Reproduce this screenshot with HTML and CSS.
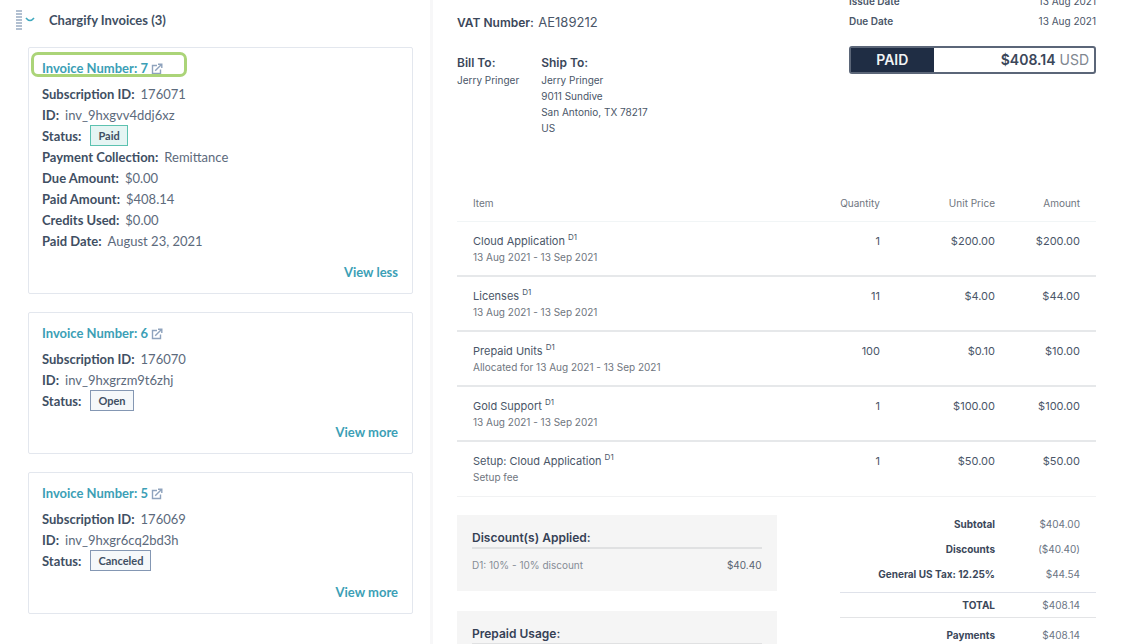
FILE: index.html
```
<!DOCTYPE html>
<html lang="en">
<head>
    <meta charset="UTF-8">
    <meta name="viewport" content="width=device-width, initial-scale=1.0">
    <title>Chargify Invoices</title>
    <link rel="stylesheet" href="styles.css">
</head>
<body>
    <!-- Shared icon -->
    <svg class="sprite" width="0" height="0">
        <symbol id="external" viewBox="0 0 12 12">
            <path d="M6 2.5H1.5v8h8V6.5M4.2 7.8L10.5 1.5M7 1.2h3.8V5" fill="none" stroke="currentColor" stroke-width="1.4"/>
        </symbol>
    </svg>
    <div class="page">
        <aside class="sidebar">
            <button type="button" class="panel-header">
                <svg class="grip" viewBox="0 0 6 20"><path d="M0 1h6M0 4h6M0 7h6M0 10h6M0 13h6M0 16h6M0 19h6" stroke="#99acc2" stroke-width="1.4"/></svg>
                <svg class="chevron" viewBox="0 0 10 6"><path d="M1 1q4 5 8 0" fill="none" stroke="#3fa9be" stroke-width="1.6"/></svg>
                <span>Chargify Invoices (3)</span>
            </button>

            <div class="card">
                <div class="highlight"></div>
                <a href="#" class="card-title">Invoice Number: 7 <svg class="external"><use href="#external"/></svg></a>
                <dl>
                    <div><dt>Subscription ID:</dt><dd>176071</dd></div>
                    <div><dt>ID:</dt><dd>inv_9hxgvv4ddj6xz</dd></div>
                    <div><dt>Status:</dt><dd class="tag paid">Paid</dd></div>
                    <div><dt>Payment Collection:</dt><dd>Remittance</dd></div>
                    <div><dt>Due Amount:</dt><dd>$0.00</dd></div>
                    <div><dt>Paid Amount:</dt><dd>$408.14</dd></div>
                    <div><dt>Credits Used:</dt><dd>$0.00</dd></div>
                    <div><dt>Paid Date:</dt><dd>August 23, 2021</dd></div>
                </dl>
                <button type="button" class="view">View less</button>
            </div>

            <div class="card">
                <a href="#" class="card-title">Invoice Number: 6 <svg class="external"><use href="#external"/></svg></a>
                <dl>
                    <div><dt>Subscription ID:</dt><dd>176070</dd></div>
                    <div><dt>ID:</dt><dd>inv_9hxgrzm9t6zhj</dd></div>
                    <div><dt>Status:</dt><dd class="tag">Open</dd></div>
                </dl>
                <button type="button" class="view">View more</button>
            </div>

            <div class="card">
                <a href="#" class="card-title">Invoice Number: 5 <svg class="external"><use href="#external"/></svg></a>
                <dl>
                    <div><dt>Subscription ID:</dt><dd>176069</dd></div>
                    <div><dt>ID:</dt><dd>inv_9hxgr6cq2bd3h</dd></div>
                    <div><dt>Status:</dt><dd class="tag">Canceled</dd></div>
                </dl>
                <button type="button" class="view">View more</button>
            </div>
        </aside>

        <main class="invoice">
            <header class="invoice-top">
                <div class="parties">
                    <p class="vat"><b>VAT Number:</b> <span>AE189212</span></p>
                    <div class="addresses">
                        <div>
                            <h2>Bill To:</h2>
                            <p>Jerry Pringer</p>
                        </div>
                        <div>
                            <h2>Ship To:</h2>
                            <p>Jerry Pringer<br>9011 Sundive<br>San Antonio, TX 78217<br>US</p>
                        </div>
                    </div>
                </div>
                <div class="meta">
                    <div class="meta-row"><b>Issue Date</b><span>13 Aug 2021</span></div>
                    <div class="meta-row"><b>Due Date</b><span>13 Aug 2021</span></div>
                    <div class="total-box">
                        <span class="total-status">PAID</span>
                        <span class="total-amount"><b>$408.14</b> USD</span>
                    </div>
                </div>
            </header>

            <table class="items">
                <thead>
                    <tr><th>Item</th><th class="qty">Quantity</th><th class="price">Unit Price</th><th class="amount">Amount</th></tr>
                </thead>
                <tbody>
                    <tr><td>Cloud Application <sup>D1</sup><small>13 Aug 2021 - 13 Sep 2021</small></td><td>1</td><td>$200.00</td><td>$200.00</td></tr>
                    <tr><td>Licenses <sup>D1</sup><small>13 Aug 2021 - 13 Sep 2021</small></td><td>11</td><td>$4.00</td><td>$44.00</td></tr>
                    <tr><td>Prepaid Units <sup>D1</sup><small>Allocated for 13 Aug 2021 - 13 Sep 2021</small></td><td>100</td><td>$0.10</td><td>$10.00</td></tr>
                    <tr><td>Gold Support <sup>D1</sup><small>13 Aug 2021 - 13 Sep 2021</small></td><td>1</td><td>$100.00</td><td>$100.00</td></tr>
                    <tr><td>Setup: Cloud Application <sup>D1</sup><small>Setup fee</small></td><td>1</td><td>$50.00</td><td>$50.00</td></tr>
                </tbody>
            </table>

            <div class="summary">
                <div class="notes">
                    <section class="note">
                        <h3>Discount(s) Applied:</h3>
                        <p><span>D1: 10% - 10% discount</span><span class="note-value">$40.40</span></p>
                    </section>
                    <section class="note">
                        <h3>Prepaid Usage:</h3>
                    </section>
                </div>
                <table class="totals">
                    <tr><th>Subtotal</th><td>$404.00</td></tr>
                    <tr><th>Discounts</th><td>($40.40)</td></tr>
                    <tr class="tax"><th>General US Tax: 12.25%</th><td>$44.54</td></tr>
                    <tr class="grand"><th>TOTAL</th><td>$408.14</td></tr>
                    <tr class="payments"><th>Payments</th><td>$408.14</td></tr>
                </table>
            </div>
        </main>
    </div>
</body>
</html>
```
FILE: styles.css
```
* {
    box-sizing: border-box;
}
body {
    margin: 0;
    background: #fff;
    color: #4a5668;
    font-family: Inter, "Liberation Sans", sans-serif;
    font-size: 11px;
}
h2, h3, p, dl, dd {
    margin: 0;
}
b, h2, h3 {
    font-weight: 600;
}
button {
    padding: 0;
    border: none;
    background: none;
    font: inherit;
    cursor: pointer;
}
a {
    text-decoration: none;
}
.sprite {
    position: absolute;
}
.page {
    display: flex;
    height: 100vh;
    overflow: hidden;
}

/* Left panel */
.sidebar {
    flex: 0 0 433px;
    padding: 0 17px 0 28px;
    border-right: 3px solid #f7f7f8;
    font-family: Lato, "Liberation Sans", sans-serif;
    font-size: 13px;
}
.panel-header {
    display: flex;
    align-items: center;
    width: 100%;
    height: 40px;
    margin: 0 0 7px -12px;
    color: #3f4f63;
    font-weight: bold;
}
.grip {
    width: 6px;
    height: 20px;
}
.chevron {
    width: 10px;
    height: 6px;
    margin: 0 14px 0 3px;
}
.card {
    position: relative;
    margin-bottom: 18px;
    padding: 10px 14px 11px 13px;
    border: 1px solid #e3e7ee;
    border-radius: 2px;
}
.highlight {
    position: absolute;
    top: 4px;
    left: 2px;
    width: 156px;
    height: 25px;
    border: 3px solid #abd478;
    border-radius: 7px;
}
.card-title {
    display: flex;
    align-items: center;
    margin-bottom: 4px;
    color: #3c9fb6;
    font-weight: bold;
    line-height: 21px;
}
.external {
    width: 12px;
    height: 12px;
    margin-left: 3px;
    color: #8fa3bd;
}
.card dl div {
    display: flex;
    align-items: center;
    height: 21px;
}
.card dt {
    margin-right: 6px;
    color: #3f4f63;
    font-weight: bold;
}
.card dd {
    color: #5c6a7c;
}
.card .tag {
    margin-left: 3px;
    padding: 0 7px;
    border: 1px solid #8497b3;
    background: #f5f8fa;
    color: #3f4f63;
    font-size: 11px;
    font-weight: bold;
    line-height: 19px;
}
.card .paid {
    border-color: #5cc2b0;
    background: #e5f5f3;
}
.view {
    display: block;
    margin: 11px 0 0 auto;
    color: #3c9fb6;
    font-weight: bold;
    line-height: 20px;
}

/* Invoice document */
.invoice {
    flex: 1;
    padding: 0 50px 0 24px;
}
.invoice-top {
    display: flex;
    justify-content: space-between;
    height: 185px;
}
.vat {
    padding-top: 12px;
    font-size: 12px;
    line-height: 20px;
}
.vat b, .addresses h2 {
    color: #3b475a;
}
.vat span {
    margin-left: 1px;
    font-size: 13px;
}
.addresses {
    display: flex;
    gap: 22px;
    margin-top: 22px;
    font-size: 10px;
    line-height: 16px;
}
.addresses h2 {
    margin-bottom: 1px;
    font-size: 12px;
}
.meta {
    width: 247px;
    margin-top: -9px;
}
.meta-row {
    display: flex;
    justify-content: space-between;
    font-size: 10px;
    line-height: 20px;
}
.total-box {
    display: flex;
    height: 28px;
    margin-top: 15px;
    border: 2px solid #5b6678;
    border-radius: 3px;
    line-height: 24px;
}
.total-status {
    flex: 0 0 34%;
    background: #1f2d44;
    color: #f1f3f5;
    font-size: 14px;
    font-weight: 600;
    text-align: center;
}
.total-amount {
    flex: 1;
    padding-right: 5px;
    color: #808790;
    font-size: 14px;
    text-align: right;
}
.total-amount b {
    color: #3b475a;
}
table {
    border-collapse: collapse;
}
th, td {
    padding: 0 16px;
    text-align: right;
}
.items {
    width: 100%;
    table-layout: fixed;
}
.items th {
    height: 36px;
    border-bottom: 1px solid #f1f5f6;
    color: #6f7680;
    font-size: 10px;
    font-weight: normal;
}
.items th:first-child, .items td:first-child {
    text-align: left;
}
.qty {
    width: 84px;
}
.price {
    width: 115px;
}
.amount {
    width: 85px;
}
.items td {
    height: 55px;
    padding-top: 11px;
    border-bottom: 2px solid #e6e8ea;
    line-height: 16px;
    vertical-align: top;
}
.items tr:last-child td {
    border-bottom: 1px solid #f1f2f3;
}
.items sup {
    font-size: 8px;
    line-height: 0;
}
.items small {
    display: block;
    color: #6f7680;
    font-size: 10px;
}
.summary {
    display: flex;
    justify-content: space-between;
    align-items: flex-start;
    margin-top: 15px;
}
.notes {
    flex: 0 0 50%;
    margin-top: 3px;
}
.note {
    height: 76px;
    margin-bottom: 20px;
    padding: 13px 15px 0;
    background: #f5f5f5;
}
.note h3 {
    border-bottom: 2px solid #e0e1e2;
    color: #354155;
    font-size: 12px;
    line-height: 19px;
}
.note p {
    display: flex;
    justify-content: space-between;
    margin-top: 7px;
    color: #858c96;
    font-size: 10px;
    line-height: 18px;
}
.note-value {
    color: #5a6473;
}
.totals {
    width: 40%;
    font-size: 10px;
}
.totals th, .totals td {
    height: 25px;
}
.totals th {
    color: #3b475a;
    font-weight: 700;
    white-space: nowrap;
}
.totals td {
    width: 85px;
    color: #6b7584;
}
.totals .tax th, .totals .tax td {
    height: 31px;
    padding-bottom: 5px;
}
.totals .grand {
    border-top: 1px solid #dfe2ea;
    border-bottom: 1px solid #e3e4e6;
}
.totals .payments th, .totals .payments td {
    height: 34px;
}
```
